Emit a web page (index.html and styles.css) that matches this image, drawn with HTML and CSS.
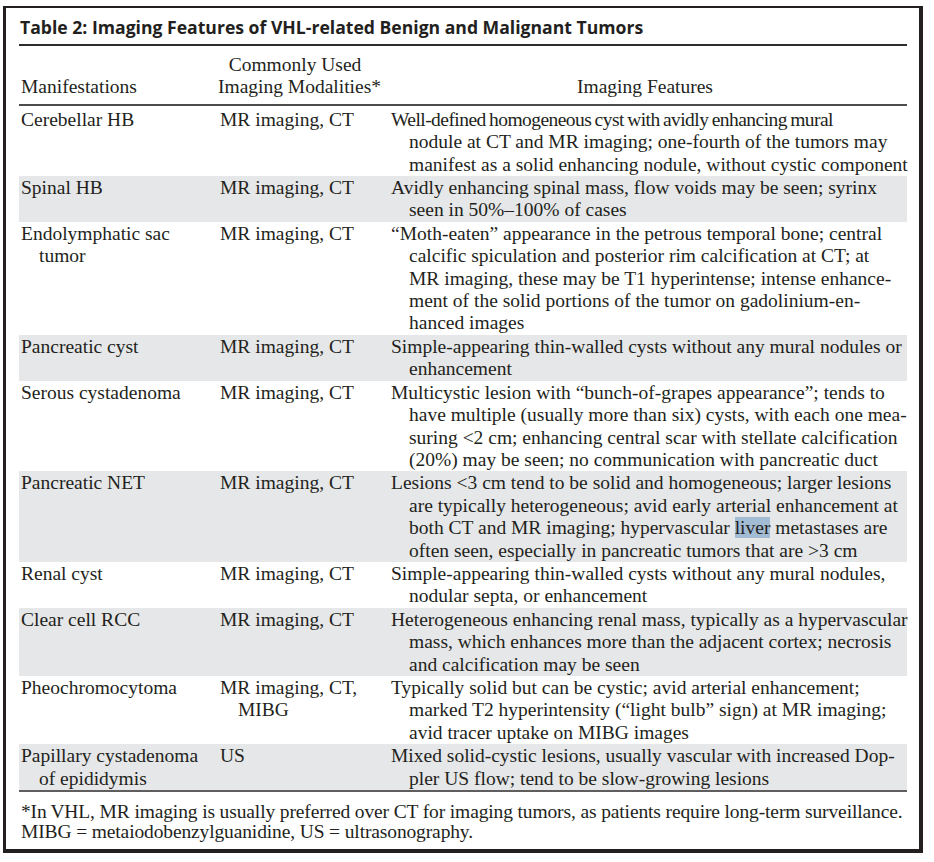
FILE: index.html
```html
<!DOCTYPE html>
<html lang="en">
<head>
<meta charset="utf-8">
<title>Table 2</title>
<link rel="stylesheet" href="styles.css">
</head>
<body>
<div class="frame">
  <h1 class="title">Table 2: Imaging Features of VHL-related Benign and Malignant Tumors</h1>
  <table class="tbl">
    <colgroup>
      <col class="c1"><col class="c2"><col class="c3">
    </colgroup>
    <thead>
      <tr>
        <th class="h1">Manifestations</th>
        <th class="h2">Commonly Used<br>Imaging Modalities*</th>
        <th class="h3">Imaging Features</th>
      </tr>
    </thead>
    <tbody>
      <tr class="first">
        <td>Cerebellar HB</td>
        <td>MR imaging, CT</td>
        <td><span class="tight">Well-defined homogeneous cyst with avidly enhancing mural</span><br>nodule at CT and MR imaging; one-fourth of the tumors may<br>manifest as a solid enhancing nodule, without cystic component</td>
      </tr>
      <tr class="shade">
        <td>Spinal HB</td>
        <td>MR imaging, CT</td>
        <td>Avidly enhancing spinal mass, flow voids may be seen; syrinx<br>seen in 50%–100% of cases</td>
      </tr>
      <tr>
        <td>Endolymphatic sac<br>tumor</td>
        <td>MR imaging, CT</td>
        <td>“Moth-eaten” appearance in the petrous temporal bone; central<br>calcific spiculation and posterior rim calcification at CT; at<br>MR imaging, these may be T1 hyperintense; intense enhance-<br>ment of the solid portions of the tumor on gadolinium-en-<br>hanced images</td>
      </tr>
      <tr class="shade">
        <td>Pancreatic cyst</td>
        <td>MR imaging, CT</td>
        <td>Simple-appearing thin-walled cysts without any mural nodules or<br>enhancement</td>
      </tr>
      <tr>
        <td>Serous cystadenoma</td>
        <td>MR imaging, CT</td>
        <td>Multicystic lesion with “bunch-of-grapes appearance”; tends to<br>have multiple (usually more than six) cysts, with each one mea-<br>suring &lt;2 cm; enhancing central scar with stellate calcification<br>(20%) may be seen; no communication with pancreatic duct</td>
      </tr>
      <tr class="shade">
        <td>Pancreatic NET</td>
        <td>MR imaging, CT</td>
        <td>Lesions &lt;3 cm tend to be solid and homogeneous; larger lesions<br>are typically heterogeneous; avid early arterial enhancement at<br>both CT and MR imaging; hypervascular <span class="hl">liver</span> metastases are<br>often seen, especially in pancreatic tumors that are &gt;3 cm</td>
      </tr>
      <tr>
        <td>Renal cyst</td>
        <td>MR imaging, CT</td>
        <td>Simple-appearing thin-walled cysts without any mural nodules,<br>nodular septa, or enhancement</td>
      </tr>
      <tr class="shade">
        <td>Clear cell RCC</td>
        <td>MR imaging, CT</td>
        <td>Heterogeneous enhancing renal mass, typically as a hypervascular<br>mass, which enhances more than the adjacent cortex; necrosis<br>and calcification may be seen</td>
      </tr>
      <tr>
        <td>Pheochromocytoma</td>
        <td>MR imaging, CT,<br>MIBG</td>
        <td>Typically solid but can be cystic; avid arterial enhancement;<br>marked T2 hyperintensity (“light bulb” sign) at MR imaging;<br>avid tracer uptake on MIBG images</td>
      </tr>
      <tr class="shade">
        <td>Papillary cystadenoma<br>of epididymis</td>
        <td>US</td>
        <td>Mixed solid-cystic lesions, usually vascular with increased Dop-<br>pler US flow; tend to be slow-growing lesions</td>
      </tr>
    </tbody>
  </table>
  <p class="foot">*In&#8201;VHL, MR imaging is usually preferred over CT for imaging tumors, as patients require long-term surveillance.<br>MIBG = metaiodobenzylguanidine, US = ultrasonography.</p>
</div>
</body>
</html>
```

FILE: styles.css
```css
html, body {
  margin: 0;
  padding: 0;
  background: #ffffff;
}

.frame {
  box-sizing: border-box;
  width: 920px;
  margin: 6px 0 0 3px;
  border-style: solid;
  border-color: #231f20;
  border-width: 2px 4px 4px 3px;
  padding: 0 12px 7px 13px;
  color: #231f20;
  font-family: "Liberation Serif", "Times New Roman", serif;
  font-size: 19.5px;
  line-height: 22.4px;
}

.title {
  margin: 0;
  padding: 8px 0 6px 1px;
  font-family: "Open Sans", "Liberation Sans", sans-serif;
  font-weight: bold;
  font-size: 17.6px;
  line-height: 22px;
  border-bottom: 2px solid #2e2b2c;
}

.tbl {
  width: 100%;
  border-collapse: separate;
  border-spacing: 0;
  table-layout: fixed;
}

.c1 { width: 199px; }
.c2 { width: 171px; }
.c3 { width: auto; }

.tbl th {
  font-weight: normal;
  vertical-align: bottom;
  padding: 8px 0 5px 0;
  border-bottom: 2px solid #4d4b4c;
  white-space: nowrap;
}

.tbl th.h1 { text-align: left; padding-left: 2px; }
.tbl th.h2 { text-align: center; padding-right: 17px; }
.tbl th.h3 { text-align: center; padding-right: 6px; }

.tbl td {
  vertical-align: top;
  white-space: nowrap;
  padding: 1px 0 0 20px;
  text-indent: -18px;
}

.tbl tr.first td { padding-top: 3px; }

.tbl tr.shade td { background: #e6e7e8; }

.tight { letter-spacing: -0.55px; word-spacing: -1px; }

.hl { background: #a2bcd3; }

.foot {
  margin: 0;
  border-top: 2px solid #5f5d5e;
  padding: 10px 0 0 2px;
  line-height: 20px;
  letter-spacing: -0.13px;
  white-space: nowrap;
}
```
